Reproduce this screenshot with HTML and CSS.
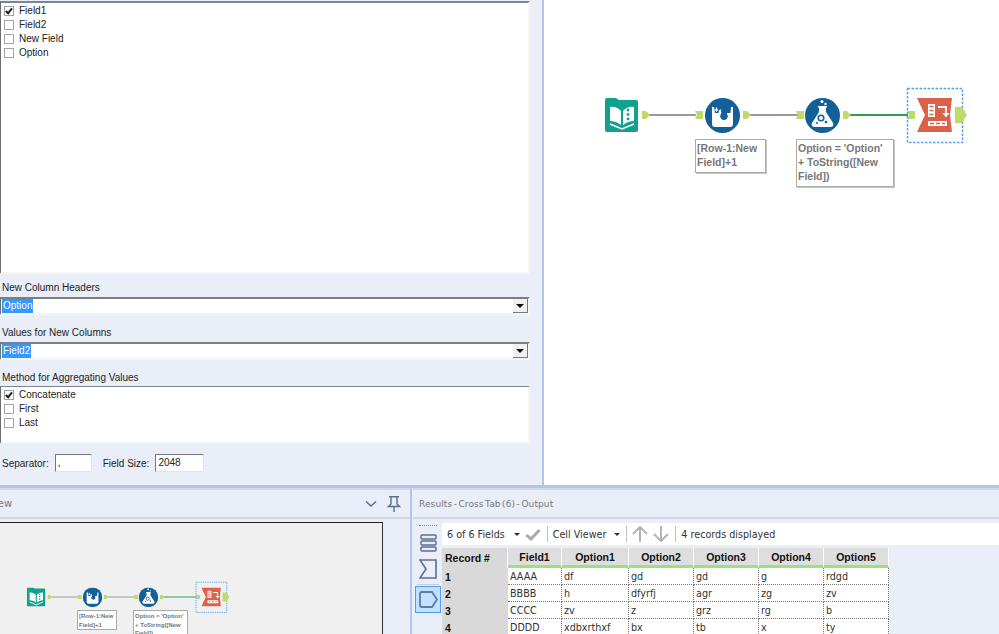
FILE: index.html
```html
<!DOCTYPE html>
<html lang="en">
<head>
  <meta charset="UTF-8" />
  <title>Cross Tab</title>
  <link rel="stylesheet" href="styles.css">
</head>
<body>
  <!-- shared icons -->
  <svg class="defs" width="0" height="0">
    <defs>
      <symbol id="anchorIn" viewBox="0 0 8 8">
        <path d="M0 0H8V8H0L2 4Z" fill="#bcdb69" />
      </symbol>
      <symbol id="anchorOut" viewBox="0 0 8 8">
        <path d="M0 0H4L8 4L4 8H0Z" fill="#bcdb69" />
      </symbol>
      <symbol id="bookIcon" viewBox="0 0 34 34">
        <path d="M2 0H11L14 2H31Q33 2 33 4V32Q33 34 31 34H3Q0 34 0 32V2Q0 0 2 0Z" fill="#12a08f" />
        <path d="M5 9Q11 8 16 13V27Q11 23 5 23Z" fill="#fff" />
        <path d="M18 13Q23 8 29 9V23Q23 23 18 27Z" fill="#fff" />
        <circle cx="23" cy="12" r="1.4" fill="#12a08f" />
        <circle cx="23" cy="16.5" r="1.4" fill="#12a08f" />
        <circle cx="23" cy="21" r="1.4" fill="#12a08f" />
        <path d="M5 26L17 31L29 26" fill="none" stroke="#fff" stroke-width="1.6" />
      </symbol>
      <symbol id="multiRowIcon" viewBox="0 0 35 35">
        <circle cx="17.500" cy="17.500" r="17.500" fill="#135f98" />
        <path d="M7 9H9L10 15H25.500L26 9H28V26Q28 29 25 29H10Q7 29 7 26Z" fill="#fff" />
        <path d="M11.500 9L13 12L11.500 14L10 12Z" fill="#fff" />
        <path d="M14 12.500L15.500 11L16.500 15H13.500Z" fill="#fff" />
        <path d="M19 11Q23 16.500 22.800 18.500Q22 22 19 22Q16 22 15.200 18.500Q15 16.500 19 11Z" fill="#135f98" />
      </symbol>
      <symbol id="formulaIcon" viewBox="0 0 35 35">
        <circle cx="17.500" cy="17.500" r="17.500" fill="#135f98" />
        <circle cx="17" cy="3.500" r="1.500" fill="#fff" />
        <circle cx="20.500" cy="6" r="1.200" fill="#fff" />
        <path d="M13 8H22V9.500H21V14L28 25Q29.500 29 25 29H10Q5.500 29 7 25L14 14V9.500H13Z" fill="#fff" />
        <circle cx="16" cy="20" r="2.800" fill="none" stroke="#135f98" stroke-width="1.500" />
        <circle cx="21" cy="24" r="1.300" fill="#135f98" />
        <circle cx="12" cy="25" r="1" fill="#135f98" />
      </symbol>
      <symbol id="crossTabIcon" viewBox="0 0 35 34">
        <path d="M0 0H35L33 17L35 34H0L8 17Z" fill="#dc6149" />
        <path d="M11 6H18V19H11Z" fill="#fff" />
        <path d="M12.500 8.500H16.500M12.500 12.500H16.500M12.500 16.500H16.500" stroke="#dc6149" stroke-width="1.500" />
        <path d="M21 9H29V16" fill="none" stroke="#fff" stroke-width="1.800" />
        <path d="M25.500 15H32.500L29 19.500Z" fill="#fff" />
        <path d="M11 23H30V28H11Z" fill="#fff" />
        <path d="M13 25.500H17M19 25.500H23M25 25.500H28" stroke="#dc6149" stroke-width="1.500" />
      </symbol>
      <!-- whole workflow, coordinates are those of the big canvas -->
      <symbol id="flow" viewBox="600 85 370 60">
        <path d="M649 115H696M750 115H798" stroke="#9a9a9a" stroke-width="2" />
        <path d="M850 115H908" stroke="#2f9e50" stroke-width="2" />
        <use href="#bookIcon" x="605" y="98" width="34" height="34" />
        <use href="#anchorOut" x="642" y="111" width="8" height="8" />
        <use href="#anchorIn" x="695" y="111" width="8" height="8" />
        <use href="#multiRowIcon" x="705" y="98" width="35" height="35" />
        <use href="#anchorOut" x="743" y="111" width="8" height="8" />
        <use href="#anchorIn" x="796" y="111" width="8" height="8" />
        <use href="#formulaIcon" x="805" y="98" width="35" height="35" />
        <use href="#anchorOut" x="843" y="111" width="8" height="8" />
        <use href="#anchorIn" x="907" y="111" width="8" height="8" />
        <use href="#crossTabIcon" x="917" y="98" width="35" height="34" />
        <rect x="907.500" y="88.500" width="55" height="54" fill="none" stroke="#4da3f5" stroke-width="1.500" stroke-dasharray="2.500 1.500" />
        <path d="M955 107H962L967 115L962 123H955Z" fill="#bcdb69" />
      </symbol>
    </defs>
  </svg>

  <div class="top">
    <!-- Cross tab configuration -->
    <div class="config">
      <div class="listbox listbox-fields">
        <div class="check-row"><span class="check checked"></span>Field1</div>
        <div class="check-row"><span class="check"></span>Field2</div>
        <div class="check-row"><span class="check"></span>New Field</div>
        <div class="check-row"><span class="check"></span>Option</div>
      </div>

      <div class="field-label">New Column Headers</div>
      <div class="combo">
        <span class="combo-value">Option</span>
        <span class="combo-btn"></span>
      </div>

      <div class="field-label">Values for New Columns</div>
      <div class="combo">
        <span class="combo-value">Field2</span>
        <span class="combo-btn"></span>
      </div>

      <div class="field-label">Method for Aggregating Values</div>
      <div class="listbox listbox-method">
        <div class="check-row"><span class="check checked"></span>Concatenate</div>
        <div class="check-row"><span class="check"></span>First</div>
        <div class="check-row"><span class="check"></span>Last</div>
      </div>

      <div class="size-row">
        <span>Separator:</span>
        <span class="text-box box-sep">,</span>
        <span class="size-label">Field Size:</span>
        <span class="text-box box-size">2048</span>
      </div>
    </div>

    <!-- Workflow canvas -->
    <div class="canvas">
      <svg class="flow-big"><use href="#flow" /></svg>
      <div class="note note-row">[Row-1:New<br>Field]+1</div>
      <div class="note note-option">Option = 'Option'<br>+ ToString([New<br>Field])</div>
    </div>
  </div>

  <div class="bottom">
    <!-- Overview pane -->
    <div class="pane pane-overview">
      <div class="pane-head">
        <span class="overview-title">Overview</span>
        <svg class="chevron" width="12" height="8" viewBox="0 0 12 8">
          <path d="M1 1.500L6 6L11 1.500" fill="none" stroke="#5b6f92" stroke-width="1.500" />
        </svg>
        <svg class="pin" width="14" height="16" viewBox="0 0 14 16">
          <path d="M2 .7H12M4 1V8L1.500 10.500H12.500L10 8V1M7 11V16" fill="none" stroke="#5b6f92" stroke-width="1.400" />
        </svg>
      </div>
      <div class="mini-canvas">
        <svg class="flow-mini"><use href="#flow" /></svg>
        <div class="mini-note mini-note-row">[Row-1:New<br>Field]+1</div>
        <div class="mini-note mini-note-option">Option = 'Option'<br>+ ToString([New<br>Field])</div>
      </div>
    </div>

    <!-- Results pane -->
    <div class="pane pane-results">
      <div class="pane-head results-head">Results - Cross Tab (6) - Output</div>
      <div class="results-body">
        <div class="side-tools">
          <div class="dots"></div>
          <svg class="side-icon" width="17" height="18" viewBox="0 0 17 18">
            <g fill="none" stroke="#5b6f92" stroke-width="1.500">
              <rect x="1" y="1" width="15" height="4" rx="1" />
              <rect x="1" y="7" width="15" height="4" rx="1" />
              <rect x="1" y="13" width="15" height="4" rx="1" />
            </g>
          </svg>
          <svg class="side-icon" width="18" height="20" viewBox="0 0 18 20">
            <path d="M1 1H17V19H1L7 10Z" fill="none" stroke="#5b6f92" stroke-width="1.600" />
          </svg>
          <div class="side-rule"></div>
          <div class="side-active">
            <svg width="19" height="17" viewBox="0 0 19 17">
              <path d="M3 1H13L18 8.500L13 16H3Q1 16 1 14V3Q1 1 3 1Z" fill="none" stroke="#5f7aa0" stroke-width="1.800" />
            </svg>
          </div>
        </div>
        <div class="results-main">
          <div class="toolbar">
            <span>6 of 6 Fields</span>
            <span class="caret caret-first"></span>
            <svg width="16" height="13" viewBox="0 0 16 13">
              <path d="M1.500 7L6 11L14.500 2" fill="none" stroke="#aaa" stroke-width="3" />
            </svg>
            <span class="tool-sep"></span>
            <span>Cell Viewer</span>
            <span class="caret"></span>
            <span class="tool-sep"></span>
            <svg width="16" height="16" viewBox="0 0 16 16">
              <path d="M8 16V2M1 8L8 1L15 8" fill="none" stroke="#b4b4b4" stroke-width="2" />
            </svg>
            <svg width="16" height="16" viewBox="0 0 16 16">
              <path d="M8 0V14M1 8L8 15L15 8" fill="none" stroke="#b4b4b4" stroke-width="2" />
            </svg>
            <span class="tool-sep"></span>
            <span>4 records displayed</span>
          </div>
          <table class="grid">
            <colgroup>
              <col class="col-rec"><col class="col-f1"><col class="col-o1">
              <col class="col-o"><col class="col-o"><col class="col-o"><col class="col-o">
            </colgroup>
            <thead>
              <tr>
                <th class="rec-head">Record #</th>
                <th>Field1</th><th>Option1</th><th>Option2</th><th>Option3</th><th>Option4</th><th>Option5</th>
              </tr>
            </thead>
            <tbody>
              <tr><td class="rec">1</td><td>AAAA</td><td>df</td><td>gd</td><td>gd</td><td>g</td><td>rdgd</td></tr>
              <tr><td class="rec">2</td><td>BBBB</td><td>h</td><td>dfyrfj</td><td>agr</td><td>zg</td><td>zv</td></tr>
              <tr><td class="rec">3</td><td>CCCC</td><td>zv</td><td>z</td><td>grz</td><td>rg</td><td>b</td></tr>
              <tr><td class="rec">4</td><td>DDDD</td><td>xdbxrthxf</td><td>bx</td><td>tb</td><td>x</td><td>ty</td></tr>
            </tbody>
          </table>
        </div>
      </div>
    </div>
  </div>
</body>
</html>
```

FILE: styles.css
```css
body {
  margin: 0;
  width: 999px;
  height: 634px;
  overflow: hidden;
  background: #e9eef9;
  font-family: "Liberation Sans", Arial, sans-serif;
  font-size: 10px;
  color: #222;
  display: flex;
  flex-direction: column;
}

.defs {
  position: absolute;
}

.top {
  display: flex;
  height: 485px;
  flex-shrink: 0;
}

/* config panel */
.config {
  width: 530px;
  padding: 1px 12px 0 0;
  border-right: 2px solid #b3c5ea;
}

.listbox {
  background: #fff;
  border-top: 2px solid #80848c;
  border-left: 1px solid #6e6e6e;
  border-right: 2px solid #f4f4f2;
  border-bottom: 2px solid #f4f4f2;
  box-sizing: border-box;
}

.listbox-fields {
  height: 273px;
}

.listbox-method {
  height: 58px;
  margin-top: -1px;
  border-top-width: 1px;
}

.check-row {
  display: flex;
  align-items: center;
  height: 14px;
  padding-left: 3px;
}

.check {
  position: relative;
  width: 8px;
  height: 8px;
  margin: 2px 5px 0 0;
  border: 1px solid #a3a3a3;
  background: #fff;
}

.check.checked::after {
  content: "";
  position: absolute;
  left: 2px;
  top: 0;
  width: 2px;
  height: 5px;
  border-right: 2px solid #1c1c1c;
  border-bottom: 2px solid #1c1c1c;
  transform: rotate(40deg);
}

.field-label {
  height: 14px;
  line-height: 16px;
  margin: 0 0 3px 2px;
}

.listbox-fields + .field-label {
  margin-top: 6px;
}

.combo {
  display: flex;
  justify-content: space-between;
  box-sizing: border-box;
  height: 18px;
  margin-bottom: 10px;
  padding-left: 1px;
  background: #fff;
  border-top: 2px solid #7e7e7e;
  border-left: 1px solid #6e6e6e;
  border-right: 2px solid #f4f4f2;
  border-bottom: 2px solid #f4f4f2;
}

.combo-value {
  background: #3399ff;
  color: #fff;
  padding: 0 1px;
  line-height: 14px;
  height: 14px;
}

.combo-btn {
  position: relative;
  width: 15px;
  background: #f0f0f0;
  border-right: 1px solid #777;
  border-bottom: 1px solid #777;
  box-sizing: border-box;
}

.combo-btn::after {
  content: "";
  position: absolute;
  left: 3px;
  top: 5px;
  border-left: 4px solid transparent;
  border-right: 4px solid transparent;
  border-top: 4px solid #111;
}

.size-row {
  display: flex;
  align-items: center;
  margin-top: 10px;
  padding-left: 2px;
}

.text-box {
  box-sizing: border-box;
  height: 18px;
  line-height: 16px;
  padding-left: 2px;
  background: #fff;
  border-top: 1px solid #777;
  border-left: 1px solid #777;
  border-right: 1px solid #e4e4e4;
  border-bottom: 1px solid #e4e4e4;
}

.box-sep {
  width: 37px;
  margin-left: 6px;
}

.size-label {
  margin: 0 6px 0 11px;
}

.box-size {
  width: 49px;
}

/* workflow canvas */
.canvas {
  position: relative;
  flex: 1;
  background: #fff;
}

.flow-big {
  position: absolute;
  left: 56px;
  top: 85px;
  width: 370px;
  height: 60px;
}

.note {
  position: absolute;
  box-sizing: border-box;
  padding: 1px;
  background: #fff;
  border: 1px solid #ababab;
  box-shadow: 1px 1px 0 #c4c4c4;
  color: #777;
  font-size: 10.500px;
  font-weight: bold;
  line-height: 14px;
  white-space: nowrap;
}

.note-row {
  left: 151px;
  top: 139px;
  width: 71px;
  height: 34px;
}

.note-option {
  left: 252px;
  top: 139px;
  width: 98px;
  height: 48px;
}

/* bottom panes */
.bottom {
  flex: 1;
  display: flex;
  min-height: 0;
  border-top: 3px solid #b3c5ea;
}

.pane {
  display: flex;
  flex-direction: column;
  min-width: 0;
}

.pane-overview {
  width: 410px;
  border-right: 2px solid #b3c5ea;
}

.pane-results {
  flex: 1;
}

.pane-head {
  display: flex;
  align-items: center;
  box-sizing: border-box;
  height: 31px;
  flex-shrink: 0;
  overflow: hidden;
  border-top: 2px solid #d3d7de;
  border-bottom: 2px solid #d3d7de;
  font-family: "DejaVu Sans", sans-serif;
  font-size: 10px;
  color: #777;
}

.overview-title {
  margin-left: -35px;
}

.chevron {
  margin-left: auto;
  margin-right: 10px;
}

.pin {
  margin-right: 9px;
}

.mini-canvas {
  position: relative;
  width: 382px;
  height: 200px;
  margin-top: 3px;
  background: #f0f0f0;
  border-top: 1px solid #222;
  border-right: 1px solid #333;
}

.flow-mini {
  position: absolute;
  left: 24px;
  top: 57px;
  width: 207px;
  height: 34px;
}

.mini-note {
  position: absolute;
  box-sizing: border-box;
  padding: 1px;
  background: #fff;
  border: 1px solid #aaa;
  color: #777;
  font-size: 6px;
  font-weight: bold;
  line-height: 8.500px;
  white-space: nowrap;
}

.mini-note-row {
  left: 77px;
  top: 87px;
  width: 40px;
  height: 20px;
}

.mini-note-option {
  left: 133px;
  top: 87px;
  width: 55px;
  height: 28px;
}

/* results */
.results-head {
  margin-left: 1px;
  padding-left: 6px;
  font-size: 9px;
  letter-spacing: .1px;
  word-spacing: -1.500px;
}

.results-body {
  flex: 1;
  display: flex;
  min-height: 0;
  padding-top: 4px;
}

.side-tools {
  width: 28px;
  padding-left: 2px;
  display: flex;
  flex-direction: column;
  align-items: center;
  flex-shrink: 0;
}

.dots {
  width: 18px;
  margin-top: 2px;
  border-top: 1px dotted #888;
}

.side-icon {
  margin-top: 8px;
}

.side-icon + .side-icon {
  margin-top: 7px;
}

.side-rule {
  width: 22px;
  margin: 5px 0 1px;
  border-top: 1px solid #c8ccd4;
}

.side-active {
  display: flex;
  align-items: center;
  justify-content: center;
  box-sizing: border-box;
  width: 26px;
  height: 27px;
  background: #c4e0ff;
  border: 1px solid #4d9df5;
}

.results-main {
  flex: 1;
  min-width: 0;
}

.toolbar {
  display: flex;
  align-items: center;
  gap: 5px;
  height: 22px;
  padding-left: 5px;
  background: #fff;
  font-family: "DejaVu Sans", sans-serif;
  font-size: 9.600px;
  color: #333;
}

.caret {
  width: 0;
  margin-left: 3px;
  border-left: 3px solid transparent;
  border-right: 3px solid transparent;
  border-top: 3px solid #333;
}

.caret-first {
  margin-left: 4px;
}

.tool-sep {
  width: 1px;
  height: 16px;
  margin-left: 1px;
  background: #c4c4c4;
}

.grid {
  width: 447px;
  margin-top: 3px;
  table-layout: fixed;
  border-collapse: separate;
  border-spacing: 0;
  background: #fff;
  font-family: "DejaVu Sans", sans-serif;
  font-size: 9.600px;
  color: #333;
}

.col-rec {
  width: 66px;
}

.col-f1 {
  width: 54px;
}

.col-o1 {
  width: 67px;
}

.col-o {
  width: 65px;
}

.grid th {
  box-sizing: border-box;
  height: 20px;
  padding: 0;
  background: #dedede;
  border-right: 1px solid #fff;
  border-bottom: 3px solid #9be27a;
  color: #111;
  font-family: "Liberation Sans", Arial, sans-serif;
  font-size: 10.500px;
}

.grid th.rec-head {
  padding-left: 3px;
  text-align: left;
  background: #d9d9d9;
  border-bottom: none;
}

.grid td {
  box-sizing: border-box;
  height: 17px;
  padding: 0 0 0 2px;
  border-right: 1px dotted #777;
  border-bottom: 1px dotted #777;
  white-space: nowrap;
  overflow: hidden;
}

.grid td.rec {
  padding-left: 3px;
  background: #d9d9d9;
  font-family: "Liberation Sans", Arial, sans-serif;
  font-size: 10.500px;
  font-weight: bold;
  color: #111;
  border: none;
}
```
